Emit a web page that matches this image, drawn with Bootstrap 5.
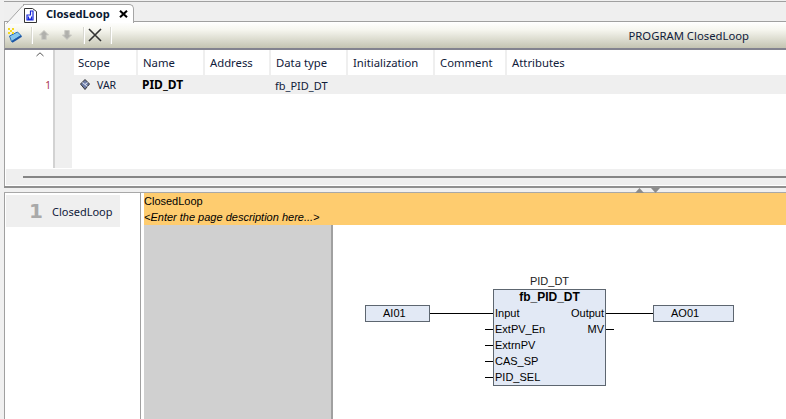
<!DOCTYPE html>
<html lang="en">
<head>
<meta charset="utf-8">
<title>ClosedLoop</title>
<link rel="stylesheet" href="https://cdn.jsdelivr.net/npm/bootstrap@5.3.0/dist/css/bootstrap.min.css">
<style>
html,body{margin:0;height:419px;width:786px;overflow:hidden;background:#f0f0f0;}
body{font-family:"Noto Sans","Open Sans",sans-serif;font-size:11.3px;line-height:1;color:#10203a;}
.app{width:786px;height:419px;padding-left:4px;}
.app>*{flex:none;}
.tabstrip{height:21px;margin-top:1px;background:#efefef;border-top:1px solid #a0a0a0;border-bottom:1px solid #a0a0a0;padding-left:19px;}
.doc-tab{height:19px;width:111px;margin-top:2px;background:#fff;border:1px solid #a5a5a5;border-bottom:0;border-top-right-radius:5px;position:relative;font-weight:700;font-size:11.1px;color:#0b1a33;}
.doc-tab>*{flex:none;}
.tab-slant{position:absolute;left:-20px;top:-1px;width:20px;height:20px;}
.doc-ic{margin-left:0;margin-top:3px;}
.doc-name{margin-left:9px;}
.close-x{margin-left:9px;}
.toolbar{height:28px;background:linear-gradient(#fff 0,#f6f6ef 30%,#c4c4b2 100%);border-left:1px solid #a0a0a0;border-bottom:2px solid #83838f;padding-left:3px;}
.toolbar>*{flex:none;}
.tb-sep{width:2px;height:17px;background:#d8d8d0;border-right:1px solid #fff;}
.s1{margin-left:9px;}
.b-up{margin-left:5px;}
.b-down{margin-left:11px;}
.s2{margin-left:10px;}
.b-x{margin-left:3px;}
.s3{margin-left:8px;}
.tb-title{margin-left:auto;padding-right:37px;margin-top:1px;}
.decl{height:119px;background:#fff;border-left:1px solid #a0a0a0;}
.gutter{width:48px;position:relative;}
.sort-caret{position:absolute;left:31px;top:2px;}
.ln{position:absolute;right:2px;top:30px;color:#a8324c;font-size:10px;}
.gut-line{width:2px;height:118px;background:#d2d2d2;}
.vband{width:17px;background:#efefef;height:118px;}
.grid-area{flex:1;position:relative;}
.head-row{height:25px;}
.hcell{height:25px;border-left:2px solid #efefef;padding:7px 0 0 5px;}
.w1{width:64px;padding-left:4px;}
.w2{width:67px;}
.w3{width:66px;}
.w4{width:77px;}
.w5{width:87px;}
.w6{width:72px;}
.w7{flex:1;}
.var-band{margin-left:-17px;height:19px;background:#efefef;font-size:11px;}
.vc{height:19px;padding-top:5px;}
.vc1{width:87px;padding-left:25px;padding-top:4px;display:flex;gap:7px;}
.vc1 span{padding-top:1px;font-size:10.5px;}
.vc2{width:133px;font-weight:700;font-size:12px;color:#000;padding-top:4px;}
.hscroll-wrap{background:#fff;border-left:1px solid #a0a0a0;height:17px;}
.hscroll{height:16px;background:#efefef;margin-left:1px;position:relative;}
.hline{position:absolute;left:17px;right:0;top:7px;height:2px;background:#858585;}
.splitter{height:7px;background:#f0f0f0;border-top:2px solid #909090;border-bottom:1px solid #a8a8a8;position:relative;}
.tri{position:absolute;top:0;}
.lower{height:226px;border-left:1px solid #a0a0a0;background:#fff;}
.pagebar{width:136px;flex:none;border-right:1px solid #a0a0a0;padding:2px 0 0 1px;}
.pagebtn{width:114px;height:32px;background:#efefef;padding-left:23px;font-size:11px;}
.pnum{width:23px;font-size:20px;font-weight:700;color:#a9a9a9;font-family:"DejaVu Sans",sans-serif;}
.gap-w{width:3px;flex:none;}
.sheet{flex:1;font-family:"Liberation Sans",sans-serif;font-size:11px;color:#000;min-width:0;}
.sheet-head{height:32px;background:#fecc6f;padding:1px 0 0 0;}
.sheet-head div{height:16px;line-height:14px;}
.canvas{flex:1;position:relative;height:194px;}
.margin-col{width:189px;height:194px;background:#d0d0d0;border-right:2px solid #a0a0a0;}
.fbd{position:absolute;left:0;top:0;width:642px;height:194px;}
.var-box{position:absolute;top:80px;height:17px;background:#e2e9f5;border:1px solid #5d6670;padding-left:17px;line-height:15px;}
.fb{position:absolute;left:349px;top:64px;width:113px;height:97px;background:#e2e9f5;border:1px solid #5d6670;}
.fb-title{font-weight:700;font-size:12px;text-align:center;line-height:14px;height:16px;}
.pin{position:absolute;line-height:14px;white-space:nowrap;}
.wire{position:absolute;height:1px;background:#000;}
.inst{position:absolute;left:349px;top:49px;width:113px;text-align:center;line-height:14px;color:#222;}
</style>
</head>
<body>
<div class="app d-flex flex-column">
  <div class="tabstrip d-flex">
    <div class="doc-tab d-flex align-items-center">
      <svg class="tab-slant" viewBox="0 0 20 20"><path d="M2 20 L19 1 H20 V20Z" fill="#f7f7f7"/><path d="M2.5 19.5 L19 1.5 H20" fill="none" stroke="#a5a5a5"/></svg>
      <svg class="doc-ic" width="13" height="15" viewBox="0 0 13 15"><path d="M.5.5h8l4 3v11H.5z" fill="#fff" stroke="#333"/><path d="M6.5 3h2.5v9H3V7h3.500zM4.500 8.500v2.500h3V8.500" fill="none" stroke="#1626d8" stroke-width="1.200"/></svg>
      <span class="doc-name">ClosedLoop</span>
      <svg class="close-x" width="9" height="8" viewBox="0 0 9 8"><path d="M1 .8 L8 7.200M8 .8 L1 7.200" stroke="#000" stroke-width="2.100"/></svg>
    </div>
  </div>
  <div class="toolbar d-flex align-items-center">
    <svg width="14" height="15" viewBox="0 0 14 15"><path d="M3.500 13.500 L1.500 8 L9.500 4 L13 7.500Z" fill="#86c6ee" stroke="#2a6fb5"/><path d="M4 14 L13.500 8" stroke="#1b55a5" stroke-width="2"/><path d="M0 0h2v2H0zM4 0h2v2H4zM0 4h2v2H0zM2 2h2v2H2zM4 4h2v2H4z" fill="#f5d820"/></svg>
    <span class="tb-sep s1"></span>
    <svg class="b-up" width="12" height="12" viewBox="0 0 12 12"><path d="M6 1.500 L10.500 6 H8.200 V10.500 H3.800 V6 H1.500Z" fill="#b0b0ac" stroke="#c8c8c2"/></svg>
    <svg class="b-down" width="12" height="12" viewBox="0 0 12 12"><path d="M6 10.500 L10.500 6 H8.200 V1.500 H3.800 V6 H1.500Z" fill="#b0b0ac" stroke="#c8c8c2"/></svg>
    <span class="tb-sep s2"></span>
    <svg class="b-x" width="14" height="14" viewBox="0 0 14 14"><path d="M1 1 L13 13M13 1 L1 13" stroke="#333" stroke-width="1.600"/></svg>
    <span class="tb-sep s3"></span>
    <span class="tb-title">PROGRAM ClosedLoop</span>
  </div>
  <div class="decl d-flex">
    <div class="gutter">
      <svg class="sort-caret" width="8" height="5" viewBox="0 0 8 5"><path d="M.5 4 L4 .8 L7.500 4" fill="none" stroke="#555"/></svg>
      <span class="ln">1</span>
    </div>
    <div class="gut-line"></div>
    <div class="vband"></div>
    <div class="grid-area">
      <div class="head-row d-flex">
        <div class="hcell w1">Scope</div><div class="hcell w2">Name</div><div class="hcell w3">Address</div><div class="hcell w4">Data type</div><div class="hcell w5">Initialization</div><div class="hcell w6">Comment</div><div class="hcell w7">Attributes</div>
      </div>
      <div class="var-band d-flex">
        <div class="vc vc1"><svg width="10" height="11" viewBox="0 0 10 11"><path d="M5 .5 L9.500 5 L5 10.500 L.5 5Z" fill="#6f7ea8" stroke="#333"/><path d="M2.500 3.500 L7.500 7.500M7.500 3.500 L5 5.500" stroke="#e8eef8"/></svg><span>VAR</span></div>
        <div class="vc vc2">PID_DT</div>
        <div class="vc">fb_PID_DT</div>
      </div>
    </div>
  </div>
  <div class="hscroll-wrap"><div class="hscroll"><div class="hline"></div></div></div>
  <div class="splitter">
    <svg class="tri" style="left:631px" width="9" height="5" viewBox="0 0 9 5"><path d="M4.500 0 L9 5H0Z" fill="#8c8c8c"/></svg>
    <svg class="tri" style="left:647px" width="9" height="5" viewBox="0 0 9 5"><path d="M0 0H9L4.500 5Z" fill="#8c8c8c"/></svg>
  </div>
  <div class="lower d-flex">
    <div class="pagebar">
      <div class="pagebtn d-flex align-items-center"><span class="pnum">1</span><span>ClosedLoop</span></div>
    </div>
    <div class="gap-w"></div>
    <div class="sheet d-flex flex-column">
      <div class="sheet-head"><div>ClosedLoop</div><div class="fst-italic">&lt;Enter the page description here...&gt;</div></div>
      <div class="canvas d-flex">
        <div class="margin-col"></div>
        <div class="fbd">
          <div class="inst">PID_DT</div>
          <div class="var-box" style="left:221px;width:65px">AI01</div>
          <div class="wire" style="left:286px;top:88px;width:63px"></div>
          <div class="fb">
            <div class="fb-title">fb_PID_DT</div>
            <span class="pin" style="left:1px;top:16px">Input</span>
            <span class="pin" style="left:1px;top:32px">ExtPV_En</span>
            <span class="pin" style="left:1px;top:48px">ExtrnPV</span>
            <span class="pin" style="left:1px;top:64px">CAS_SP</span>
            <span class="pin" style="left:1px;top:80px">PID_SEL</span>
            <span class="pin" style="right:1px;top:16px">Output</span>
            <span class="pin" style="right:1px;top:32px">MV</span>
          </div>
          <div class="wire" style="left:341px;top:104px;width:8px"></div>
          <div class="wire" style="left:341px;top:120px;width:8px"></div>
          <div class="wire" style="left:341px;top:136px;width:8px"></div>
          <div class="wire" style="left:341px;top:152px;width:8px"></div>
          <div class="wire" style="left:462px;top:88px;width:47px"></div>
          <div class="wire" style="left:462px;top:104px;width:8px"></div>
          <div class="var-box" style="left:509px;width:81px">AO01</div>
        </div>
      </div>
    </div>
  </div>
</div>
<script src="https://cdn.jsdelivr.net/npm/bootstrap@5.3.0/dist/js/bootstrap.bundle.min.js"></script>
</body>
</html>
